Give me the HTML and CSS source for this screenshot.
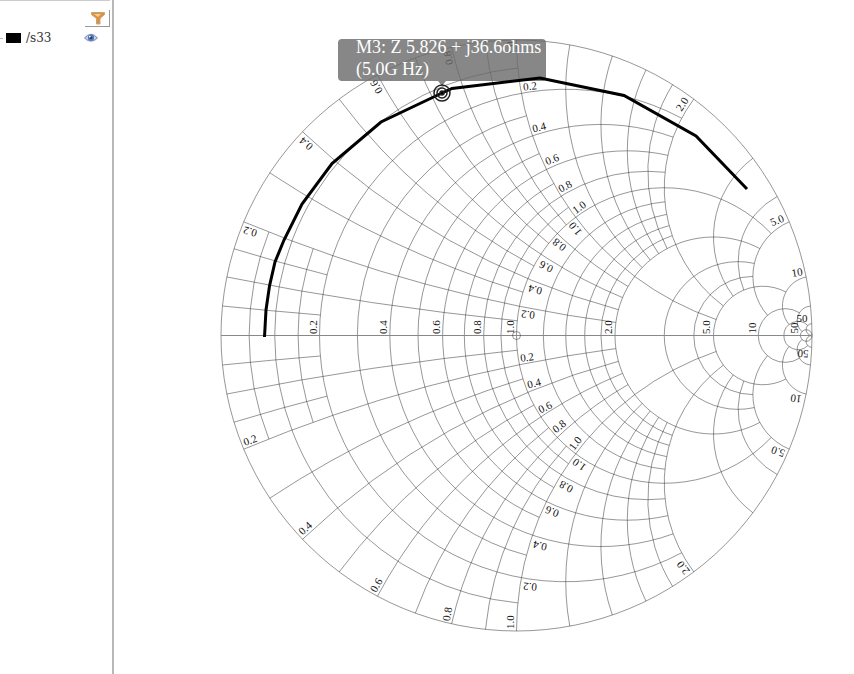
FILE: index.html
```html
<!DOCTYPE html>
<html lang="en">
<head>
<meta charset="utf-8">
<title>Smith chart</title>
<link rel="stylesheet" href="styles.css">
</head>
<body>
<aside class="sidebar">
  <div class="toolbar">
    <button class="filter" type="button" aria-label="Filter">
      <svg viewBox="0 0 16 14" width="16" height="14" aria-hidden="true">
        <path d="M1.500 1.500H14.500V3.500L10 7.500V13H6.500V7.500L1.500 3.500z" fill="#dc9238" stroke="#c9a27a" stroke-width="1"/>
        <path d="M4 3h7L8 6z" fill="#f6cf8e"/>
      </svg>
    </button>
  </div>
  <ul class="traces">
    <li class="trace">
      <span class="branch"></span>
      <span class="swatch"></span>
      <span class="name">/s33</span>
      <button class="eye" type="button" aria-label="Toggle /s33">
        <svg viewBox="0 0 14 10" width="14" height="10" aria-hidden="true">
          <path d="M.8 5Q7-2.4 13.2 5Q7 11.4.8 5z" fill="#dfe7f4" stroke="#8fa3c8" stroke-width="1.2"/>
          <circle cx="7" cy="4.8" r="3.2" fill="#5878b4"/>
          <circle cx="7" cy="4.8" r="1.4" fill="#223a70"/>
          <circle cx="5.8" cy="3.6" r=".9" fill="#fff"/>
        </svg>
      </button>
    </li>
  </ul>
</aside>
<main class="plot">
  <svg class="chart" viewBox="114 0 740 674" role="img" aria-label="Smith chart of /s33">
    <path id="grid" class="grid"/>
    <path class="axis" d="M221 335.5H812"/>
    <circle class="grid" cx="516.5" cy="335.5" r="4"/>
    <g id="labels" class="labels"></g>
    <path class="callout" d="M342 39H542Q546 39 546 43V77Q546 81 542 81H446L442 86L438 81H342Q338 81 338 77V43Q338 39 342 39z"/>
    <path class="curve" d="M264.5 337L266 310L269.5 286L275 262L284 240L302 204L332 163.5L381 122L442 93L452 88.5L540 78L624 95.5L696 136L747 189"/>
    <g class="marker">
      <circle cx="442" cy="93" r="8"/>
      <circle cx="442" cy="93" r="5"/>
      <circle class="dot" cx="442" cy="93" r="2"/>
    </g>
    <text class="reading" x="356" y="53">M3: Z 5.826 + j36.6ohms</text>
    <text class="reading" x="356" y="75">(5.0G Hz)</text>
  </svg>
</main>
<script src="chart.js"></script>
</body>
</html>
```
FILE: styles.css
```css
body {
  margin: 0;
  min-height: 100vh;
  display: flex;
  background: #fff;
}

.sidebar {
  box-sizing: border-box;
  flex: 0 0 114px;
  border-right: 2px solid #b8b8b8;
}

.toolbar {
  display: flex;
  justify-content: flex-end;
  margin-right: 2px;
  padding-top: 9px;
  border-top: 1px solid #ccc;
}

button {
  display: block;
  padding: 0;
  border: 0;
  background: none;
}

.filter {
  padding: 1px 3px 1px 5px;
  border-right: 1px solid #999;
  border-bottom: 1px solid #999;
}

.filter svg,
.eye svg,
.chart {
  display: block;
}

.traces {
  margin: 2px 0 0;
  padding: 0;
  list-style: none;
}

.trace {
  display: flex;
  align-items: center;
  height: 18px;
  font: 12px/18px "DejaVu Serif", serif;
  color: #333;
}

.branch {
  width: 3px;
  height: 1px;
  margin-right: 3px;
  background: #bbb;
}

.swatch {
  width: 15px;
  height: 10px;
  margin-right: 5px;
  background: #000;
}

.eye {
  margin: 0 14px 0 auto;
}

.plot {
  flex: 1;
  min-width: 0;
}

.chart {
  width: 100%;
  height: auto;
}

.grid {
  fill: none;
  stroke: #222;
  stroke-opacity: .68;
  stroke-width: .7;
}

.axis {
  stroke: #888;
  stroke-width: 1;
}

.labels {
  font: 11px "Liberation Serif", serif;
  fill: #111;
  text-anchor: middle;
}

.curve {
  fill: none;
  stroke: #000;
  stroke-width: 3;
}

.marker {
  fill: none;
  stroke: #222;
  stroke-width: 1.5;
}

.marker .dot {
  fill: #000;
}

.callout {
  fill: #696969;
  fill-opacity: .8;
}

.reading {
  font: 18px "Liberation Serif", serif;
  fill: #fff;
}
```
FILE: chart.js
```js
const CX = 516.5, CY = 335.5, R = 295.5;

// Reflection coefficient of the impedance r + jx, in chart coordinates.
function point(r, x) {
  const d = (r + 1) * (r + 1) + x * x;
  return [CX + R * (r * r - 1 + x * x) / d, CY - R * 2 * x / d];
}

function arc(radius, from, to, sweep) {
  return `M${from.join(" ")}A${radius} ${radius} 0 0 ${sweep} ${to.join(" ")}`;
}

// Resistance value, reactance at which its arc stops.
const resistance = [
  [.05, .2], [.1, 1], [.15, .2], [.2, 2], [.3, 1], [.4, 2], [.5, 1],
  [.6, 2], [.7, 1], [.8, 2], [.9, 1], [1, 5], [1.2, 2], [1.4, 2],
  [1.6, 2], [1.8, 2], [2, 5], [3, 5], [4, 5], [5, 10], [10, 20],
  [20, 50], [50, 1e6], [0, 1e6]
];

// Reactance value, resistance at which its arc stops.
const reactance = [
  [.05, .2], [.1, 1], [.15, .2], [.2, 2], [.3, 1], [.4, 2], [.5, 1],
  [.6, 2], [.7, 1], [.8, 2], [.9, 1], [1, 5], [1.2, 2], [1.4, 2],
  [1.6, 2], [1.8, 2], [2, 5], [3, 5], [4, 5], [5, 10], [10, 20],
  [20, 50], [50, 1e6]
];

let d = "";
for (const [r, end] of resistance) {
  const radius = R / (r + 1);
  d += arc(radius, point(r, 0), point(r, end), 1);
  d += arc(radius, point(r, 0), point(r, -end), 0);
}
for (const [x, end] of reactance) {
  const radius = R / x;
  d += arc(radius, point(0, x), point(end, x), 0);
  d += arc(radius, point(0, -x), point(end, -x), 1);
}
document.getElementById("grid").setAttribute("d", d);

// Text, centre x, centre y, rotation in degrees.
const labels = [
  ["0.2", 313, 327, -90], ["0.4", 383, 327, -90], ["0.6", 436, 327, -90],
  ["0.8", 477, 327, -90], ["1.0", 510, 327, -90], ["2.0", 608, 327, -90],
  ["5.0", 706, 327, -90], ["10", 752, 328, -90], ["50", 794, 328, -90],

  ["0.2", 250, 232, 196], ["0.4", 306, 144, 220], ["0.6", 376, 87, 240],
  ["0.8", 448, 58, 258], ["1.0", 510, 48, 270], ["2.0", 682, 104, -57],
  ["5.0", 777, 220, -22], ["10", 797, 272, -10], ["50", 802, 318, 0],

  ["0.2", 250, 440, -20], ["0.4", 305, 528, -42], ["0.6", 376, 585, -60],
  ["0.8", 447, 614, -80], ["1.0", 510, 622, -90], ["2.0", 683, 568, 233],
  ["5.0", 778, 452, 200], ["10", 796, 399, 188], ["50", 803, 354, 183],

  ["0.2", 528, 315, 187], ["0.4", 535, 290, 194], ["0.6", 546, 267, 206],
  ["0.8", 559, 245, 218], ["1.0", 575, 229, 232],
  ["0.2", 527, 357, -7], ["0.4", 534, 383, -14], ["0.6", 545, 407, -26],
  ["0.8", 559, 426, -38], ["1.0", 575, 443, -52],

  ["0.2", 530, 86, -6], ["0.4", 539, 127, -13], ["0.6", 552, 159, -22],
  ["0.8", 565, 186, -28], ["1.0", 579, 207, -36],
  ["0.2", 530, 587, 186], ["0.4", 540, 546, 193], ["0.6", 552, 512, 202],
  ["0.8", 566, 487, 208], ["1.0", 579, 465, 216]
];

const group = document.getElementById("labels");
for (const [text, x, y, angle] of labels) {
  const node = document.createElementNS("http://www.w3.org/2000/svg", "text");
  node.setAttribute("transform", `translate(${x} ${y}) rotate(${angle})`);
  node.setAttribute("y", "4");
  node.textContent = text;
  group.append(node);
}
```
